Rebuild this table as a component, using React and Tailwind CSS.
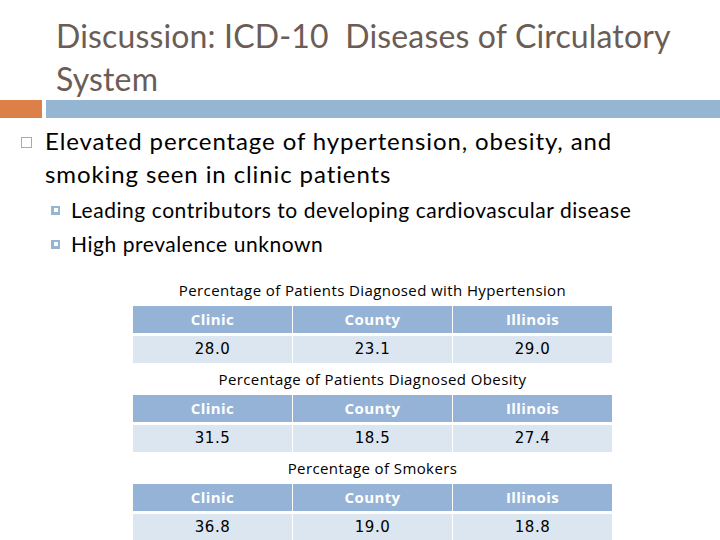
const tables = [
  { title: "Percentage of Patients Diagnosed with Hypertension", values: ["28.0", "23.1", "29.0"] },
  { title: "Percentage of Patients Diagnosed Obesity", values: ["31.5", "18.5", "27.4"] },
  { title: "Percentage of Smokers", values: ["36.8", "19.0", "18.8"] },
];

const heads = ["Clinic", "County", "Illinois"];

const StatTable = ({ title, values }) => {
  return (
    <div className="flex flex-col w-[479px]">
      <div className="h-[32px] flex items-center justify-center text-[15px] text-black tracking-[0.4px]" style={{ fontFamily: '"Open Sans", sans-serif' }}>
        {title}
      </div>
      <div className="grid grid-cols-3 gap-x-[1px] gap-y-[3px]">
        {heads.map((h) => (
          <div key={h} className="h-[27px] bg-[#95b3d7] flex items-center justify-center text-white font-bold text-[15px] tracking-[0.4px]" style={{ fontFamily: '"Open Sans", sans-serif' }}>
            {h}
          </div>
        ))}
        {values.map((v, i) => (
          <div key={i} className="h-[27px] bg-[#dce6f1] flex items-center justify-center text-black text-[15px] tracking-[0.5px]" style={{ fontFamily: '"DejaVu Sans", sans-serif' }}>
            {v}
          </div>
        ))}
      </div>
    </div>
  );
};

const App = () => {
  return (
    <div className="w-[720px] h-[540px] bg-white overflow-hidden" style={{ fontFamily: 'Lato, "Liberation Sans", sans-serif' }}>
      <div className="pl-[56px] pt-[14px] text-[32px] leading-[43px] tracking-[0.15px] text-[#6b5d55]">
        <div>Discussion: ICD-10&nbsp; Diseases of Circulatory</div>
        <div>System</div>
      </div>
      <div className="flex gap-[4px] h-[18px]">
        <div className="w-[42px] bg-[#dd8047]"></div>
        <div className="flex-1 bg-[#94b6d2]"></div>
      </div>
      <div className="mt-[6px] flex">
        <div className="w-[45px] pl-[21px] pt-[13px]">
          <div className="w-[11px] h-[11px] border border-[#c4a58c]"></div>
        </div>
        <div className="text-[24px] leading-[33px] tracking-[0.9px] text-black">
          <div>Elevated percentage of hypertension, obesity, and</div>
          <div>smoking seen in clinic patients</div>
        </div>
      </div>
      <div className="mt-[3px] flex flex-col text-[21px] leading-[34px] tracking-[0.55px] text-black">
        {["Leading contributors to developing cardiovascular disease", "High prevalence unknown"].map((t) => (
          <div key={t} className="flex items-center">
            <div className="ml-[51px] w-[9px] h-[9px] bg-[#94b6d2] flex items-center justify-center">
              <div className="w-[4px] h-[4px] bg-white"></div>
            </div>
            <div className="ml-[11px]">{t}</div>
          </div>
        ))}
      </div>
      <div className="ml-[133px] mt-[13px] flex flex-col">
        {tables.map((t) => (
          <StatTable key={t.title} title={t.title} values={t.values} />
        ))}
      </div>
    </div>
  );
};

export default App;
